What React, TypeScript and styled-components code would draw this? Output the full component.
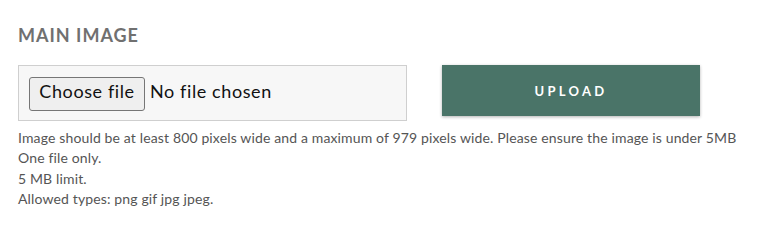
import React from "react";
import styled, { createGlobalStyle } from "styled-components";

const GlobalStyle = createGlobalStyle`
  body {
    margin: 0;
    background: #ffffff;
    font-family: Lato, "Open Sans", sans-serif;
  }
`;

export default function App() {
  return (
    <>
      <GlobalStyle />
      <Field>
        <Label>Main image</Label>
        <Row>
          <FileBox>
            <ChooseButton type="button">Choose file</ChooseButton>
            <FileName>No file chosen</FileName>
          </FileBox>
          <UploadButton type="button">Upload</UploadButton>
        </Row>
        <Help>
          <p>
            Image should be at least 800 pixels wide and a maximum of 979 pixels
            wide. Please ensure the image is under 5MB
          </p>
          <p>One file only.</p>
          <p>5 MB limit.</p>
          <p>Allowed types: png gif jpg jpeg.</p>
        </Help>
      </Field>
    </>
  );
}

const Field = styled.div`
  padding: 24px 18px 0;
`;

const Label = styled.h2`
  margin: 0 0 19px;
  font-size: 18px;
  line-height: 22px;
  font-weight: 700;
  letter-spacing: 1px;
  color: #707070;
  text-transform: uppercase;
`;

const Row = styled.div`
  display: flex;
  align-items: flex-start;
  gap: 35px;
`;

const FileBox = styled.div`
  box-sizing: border-box;
  width: 389px;
  height: 56px;
  display: flex;
  align-items: center;
  gap: 5px;
  padding: 0 10px;
  background: #f7f7f7;
  border: 1px solid #cfcfcf;
`;

const ChooseButton = styled.button`
  box-sizing: border-box;
  height: 34px;
  width: 116px;
  margin-top: 1px;
  padding: 0 0 6px;
  font-family: inherit;
  font-size: 18px;
  letter-spacing: 0.6px;
  color: #111;
  background: #efefef;
  border: 1px solid #767676;
  border-radius: 3px;
`;

const FileName = styled.span`
  padding-bottom: 5px;
  font-size: 18px;
  letter-spacing: 0.6px;
  color: #111;
`;

const UploadButton = styled.button`
  box-sizing: border-box;
  width: 258px;
  height: 51px;
  font-family: inherit;
  font-size: 13px;
  font-weight: 700;
  letter-spacing: 3.3px;
  text-transform: uppercase;
  color: #ffffff;
  background: #4a7468;
  border: none;
  box-shadow: 0 1px 3px rgba(0, 0, 0, 0.3);
`;

const Help = styled.div`
  margin-top: 7px;
  font-size: 14px;
  line-height: 20.3px;
  letter-spacing: 0.14px;
  color: #555;

  p {
    margin: 0;
  }
`;
